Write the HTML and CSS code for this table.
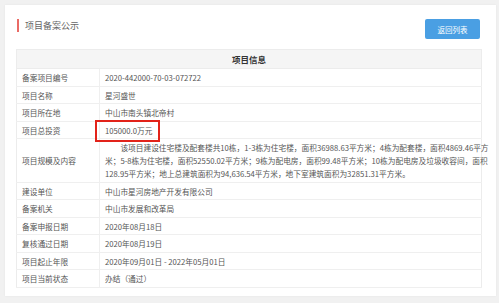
FILE: index.html
```html
<!DOCTYPE html>
<html lang="zh-CN">
<head>
<meta charset="utf-8">
<title>项目备案公示</title>
<link rel="stylesheet" href="styles.css">
</head>
<body>
<div class="card">
  <div class="topbar">
    <div class="title"><span class="mark"></span>项目备案公示</div>
    <a class="btn">返回列表</a>
  </div>
  <table class="info">
    <colgroup><col class="c1"><col></colgroup>
    <thead>
      <tr><th colspan="2">项目信息</th></tr>
    </thead>
    <tbody>
      <tr><td class="lab">备案项目编号</td><td>2020-442000-70-03-072722</td></tr>
      <tr><td class="lab">项目名称</td><td>星河盛世</td></tr>
      <tr><td class="lab">项目所在地</td><td>中山市南头镇北帝村</td></tr>
      <tr><td class="lab">项目总投资</td><td><span class="hl">105000.0万元</span></td></tr>
      <tr class="big"><td class="lab">项目规模及内容</td><td class="desc">　　该项目建设住宅楼及配套楼共10栋，1-3栋为住宅楼，面积36988.63平方米；4栋为配套楼，面积4869.46平方<br>米；5-8栋为住宅楼，面积52550.02平方米；9栋为配电房，面积99.48平方米；10栋为配电房及垃圾收容间，面积<br>128.95平方米；地上总建筑面积为94,636.54平方米，地下室建筑面积为32851.31平方米。</td></tr>
      <tr><td class="lab">建设单位</td><td>中山市星河房地产开发有限公司</td></tr>
      <tr><td class="lab">备案机关</td><td>中山市发展和改革局</td></tr>
      <tr><td class="lab">备案申报日期</td><td>2020年08月18日</td></tr>
      <tr><td class="lab">复核通过日期</td><td>2020年08月19日</td></tr>
      <tr><td class="lab">项目起止年限</td><td>2020年09月01日 - 2022年05月01日</td></tr>
      <tr><td class="lab">项目当前状态</td><td>办结（通过）</td></tr>
    </tbody>
  </table>
</div>
</body>
</html>
```

FILE: styles.css
```css
* { box-sizing: border-box; }
html, body { margin: 0; padding: 0; }
body {
  width: 499px;
  height: 303px;
  background: #f1f1f1;
  padding: 5px 3px 7px 5px;
  font-family: "Noto Sans CJK SC", "Noto Sans", sans-serif;
  color: #555;
  overflow: hidden;
}
.card {
  background: #fff;
  height: 291px;
  padding: 14px 14px 0 11px;
  box-shadow: 0 0 2px rgba(0,0,0,0.06);
}
.topbar {
  display: flex;
  justify-content: space-between;
  align-items: flex-start;
  padding-right: 2px;
  height: 30px;
}
.title {
  display: flex;
  align-items: center;
  font-size: 9px;
  line-height: 13px;
  color: #666;
  padding-left: 1px;
}
.mark {
  display: inline-block;
  width: 2px;
  height: 13px;
  background: #ea6b66;
  margin-right: 6px;
}
.btn {
  display: flex;
  align-items: center;
  justify-content: center;
  width: 55px;
  height: 20px;
  background: #4a9fe3;
  color: #fff;
  font-size: 7.5px;
  border-radius: 2px;
}
.info {
  width: 466px;
  border-collapse: collapse;
  table-layout: fixed;
  font-size: 7.7px;
  border: 1px solid #ececec;
}
.c1 { width: 83px; }
.info th {
  background: #f5f5f5;
  height: 19px;
  font-size: 8.5px;
  font-weight: bold;
  color: #333;
  text-align: center;
  padding: 0;
  border-bottom: 1px solid #ececec;
}
.info td {
  line-height: 13px;
  padding: 2px 5px 1.5px 5px;
  border-bottom: 1px solid #efefef;
  vertical-align: middle;
  white-space: nowrap;
  color: #555;
}
.info td.lab {
  border-right: 1px solid #efefef;
  padding-left: 5px;
}
.info td.desc {
  padding-right: 1px;
  overflow: visible;
}
.hl {
  position: relative;
  display: inline-block;
}
.hl::after {
  content: "";
  position: absolute;
  left: -10px;
  right: -8px;
  top: -4px;
  bottom: -5px;
  border: 2px solid #e2231a;
}
```
